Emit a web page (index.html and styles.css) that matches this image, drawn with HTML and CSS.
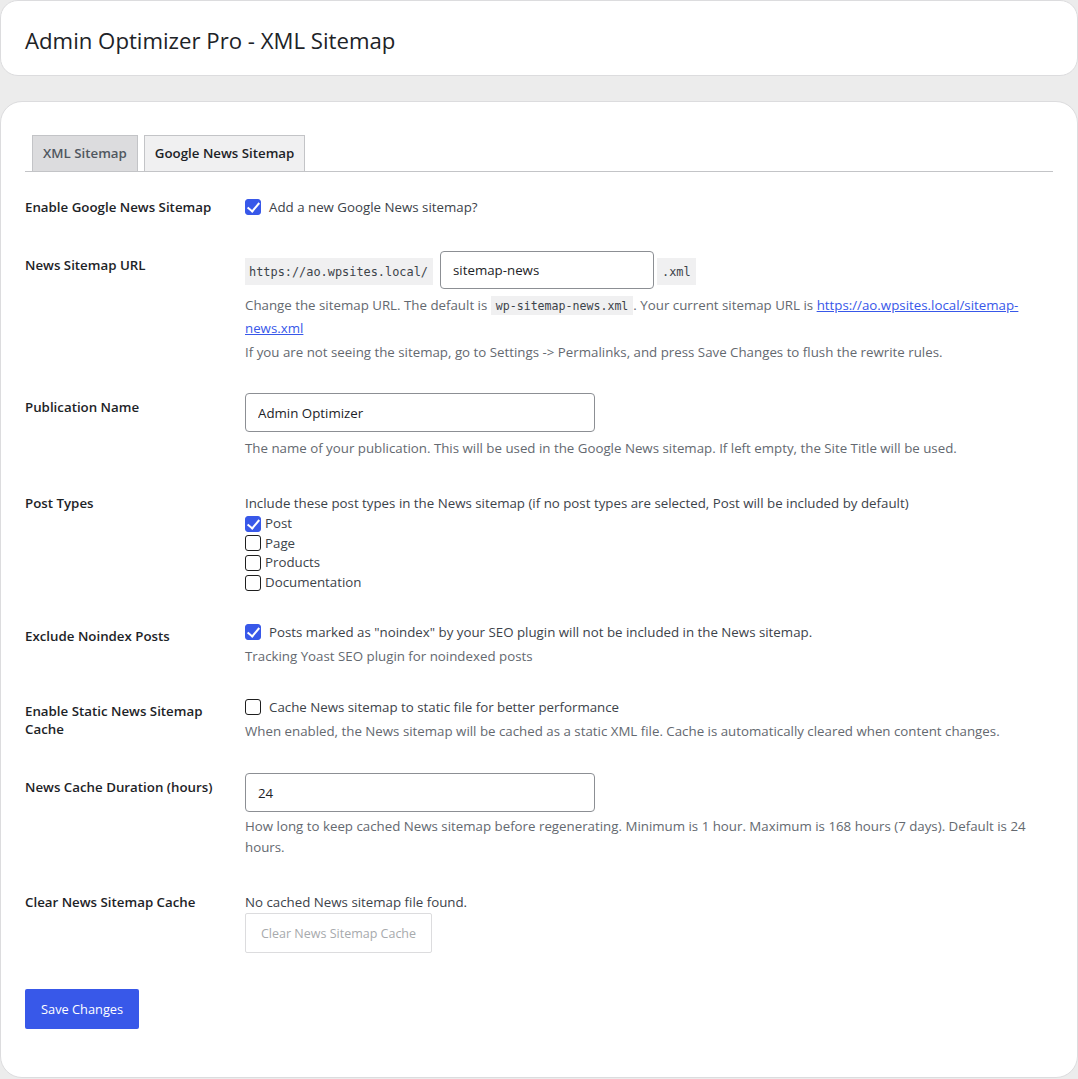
FILE: index.html
```html
<!DOCTYPE html>
<html>
	<head>
		<title>Admin Optimizer Pro - XML Sitemap</title>
		<meta charset="utf-8"/>
		<link rel="stylesheet" href="styles.css">
	</head>
	<body>
		<div class="card header-card">
			<h1>Admin Optimizer Pro - XML Sitemap</h1>
		</div>
		<div class="card main-card">
			<nav class="tabs">
				<a class="tab">XML Sitemap</a>
				<a class="tab active">Google News Sitemap</a>
			</nav>
			<form>
				<table class="form-table">
					<tr>
						<th>Enable Google News Sitemap</th>
						<td>
							<label class="check first"><input type="checkbox" checked> Add a new Google News sitemap?</label>
						</td>
					</tr>
					<tr>
						<th>News Sitemap URL</th>
						<td>
							<div class="url-row">
								<code class="prefix">https://ao.wpsites.local/</code>
								<input type="text" class="text-input url-input" value="sitemap-news">
								<code class="suffix">.xml</code>
							</div>
							<p class="description">Change the sitemap URL. The default is <code>wp-sitemap-news.xml</code>. Your current sitemap URL is <a href="#">https://ao.wpsites.local/sitemap-news.xml</a></p>
							<p class="description">If you are not seeing the sitemap, go to Settings -&gt; Permalinks, and press Save Changes to flush the rewrite rules.</p>
						</td>
					</tr>
					<tr>
						<th>Publication Name</th>
						<td>
							<input type="text" class="text-input regular" value="Admin Optimizer">
							<p class="description">The name of your publication. This will be used in the Google News sitemap. If left empty, the Site Title will be used.</p>
						</td>
					</tr>
					<tr>
						<th>Post Types</th>
						<td>
							<div class="plain">Include these post types in the News sitemap (if no post types are selected, Post will be included by default)</div>
							<label class="type"><input type="checkbox" checked>Post</label>
							<label class="type"><input type="checkbox">Page</label>
							<label class="type"><input type="checkbox">Products</label>
							<label class="type"><input type="checkbox">Documentation</label>
						</td>
					</tr>
					<tr>
						<th>Exclude Noindex Posts</th>
						<td>
							<label class="check"><input type="checkbox" checked> Posts marked as "noindex" by your SEO plugin will not be included in the News sitemap.</label>
							<p class="description">Tracking Yoast SEO plugin for noindexed posts</p>
						</td>
					</tr>
					<tr>
						<th>Enable Static News Sitemap Cache</th>
						<td>
							<label class="check"><input type="checkbox"> Cache News sitemap to static file for better performance</label>
							<p class="description">When enabled, the News sitemap will be cached as a static XML file. Cache is automatically cleared when content changes.</p>
						</td>
					</tr>
					<tr>
						<th>News Cache Duration (hours)</th>
						<td>
							<input type="number" class="text-input regular" value="24">
							<p class="description tight">How long to keep cached News sitemap before regenerating. Minimum is 1 hour. Maximum is 168 hours (7 days). Default is 24 hours.</p>
						</td>
					</tr>
					<tr>
						<th>Clear News Sitemap Cache</th>
						<td>
							<div class="plain">No cached News sitemap file found.</div>
							<button type="button" class="button-secondary" disabled>Clear News Sitemap Cache</button>
						</td>
					</tr>
				</table>
				<p class="submit">
					<button type="button" class="button-primary">Save Changes</button>
				</p>
			</form>
		</div>
	</body>
</html>
```

FILE: styles.css
```css
body {
	margin: 0;
	background-color: #ececec;
	font-family: "Open Sans", "Noto Sans", sans-serif;
	font-size: 13.3px;
	color: #1d2327;
}

.card {
	background-color: white;
	border: 1px solid #dcdcde;
	border-radius: 18px;
	box-sizing: border-box;
}

.header-card {
	height: 76px;
	padding: 5px 24px 0 24px;
	display: flex;
	align-items: center;
}

h1 {
	margin: 0;
	font-size: 22.2px;
	font-weight: 400;
	color: #1d2327;
}

.main-card {
	margin-top: 25px;
	height: 977px;
	padding: 33px 24px 0 24px;
	border-radius: 22px;
}

.tabs {
	display: flex;
	gap: 6px;
	padding-left: 7px;
	border-bottom: 1px solid #c3c4c7;
}

.tab {
	display: block;
	height: 35px;
	line-height: 35px;
	padding: 0 10px;
	border: 1px solid #c3c4c7;
	border-bottom: none;
	background-color: #dcdcde;
	font-size: 13.3px;
	font-weight: 600;
	color: #50575e;
}

.tab.active {
	background-color: #f0f0f1;
	color: #1d2327;
}

.form-table {
	border-collapse: collapse;
	margin-top: 6px;
	width: 100%;
}

.form-table th {
	width: 200px;
	padding: 20px 10px 20px 0;
	text-align: left;
	vertical-align: top;
	font-weight: 600;
	line-height: 18px;
	color: #1d2327;
}

.form-table td {
	padding: 15px 10px;
	vertical-align: top;
	line-height: 22px;
	color: #3c434a;
}

.check {
	display: flex;
	align-items: center;
	gap: 4px;
	line-height: 20px;
}

.check.first {
	margin-top: 4px;
}

.type {
	display: flex;
	align-items: center;
	gap: 4px;
	line-height: 19.6px;
}

input[type=checkbox] {
	appearance: none;
	width: 16px;
	height: 16px;
	margin: 0 4px 0 0;
	border: 1px solid #1e1e1e;
	border-radius: 3px;
	background-color: white;
	position: relative;
	flex-shrink: 0;
}

.type input[type=checkbox] {
	margin-right: 0;
}

input[type=checkbox]:checked {
	background-color: #3858e9;
	border-color: #3858e9;
}

input[type=checkbox]:checked::after {
	content: "";
	position: absolute;
	left: 4px;
	top: 0px;
	width: 5px;
	height: 10px;
	border-right: 2.5px solid white;
	border-bottom: 2.5px solid white;
	transform: rotate(40deg);
}

.description {
	margin: 5px 0 0 0;
	color: #646970;
}

.description + .description {
	margin-top: 2px;
}

.check + .description {
	margin-top: 3px;
}

.description.tight {
	margin-top: 4px;
	line-height: 21px;
}

.plain {
	margin-top: 3px;
}

code {
	font-family: "DejaVu Sans Mono", monospace;
	font-size: 11.6px;
	background-color: #f0f0f1;
	padding: 3px 5px 2px;
	color: #3c434a;
}

.url-row {
	display: flex;
	align-items: center;
}

.prefix {
	margin-right: 7px;
	margin-top: 3px;
	padding-left: 4px;
	font-size: 11.9px;
}

.suffix {
	margin-left: 3px;
	margin-top: 3px;
	font-size: 11.9px;
}

.text-input {
	height: 39px;
	box-sizing: border-box;
	border: 1px solid #8c8f94;
	border-radius: 4px;
	padding: 0 12px;
	font-family: inherit;
	font-size: 13.3px;
	color: #1d2327;
	background-color: white;
}

.url-input {
	width: 214px;
	height: 38px;
}

.regular {
	width: 350px;
	display: block;
}

a {
	color: #3858e9;
}

.button-secondary {
	display: block;
	height: 40px;
	padding: 0 15px;
	border: 1px solid #dcdcde;
	border-radius: 2px;
	background-color: white;
	font-family: inherit;
	font-size: 12.5px;
	color: #a7aaad;
}

.submit {
	margin: 21px 0 0 0;
}

.button-primary {
	height: 40px;
	padding: 0 16px;
	border: none;
	border-radius: 2px;
	background-color: #3858e9;
	font-family: inherit;
	font-size: 12.8px;
	color: white;
}
```
